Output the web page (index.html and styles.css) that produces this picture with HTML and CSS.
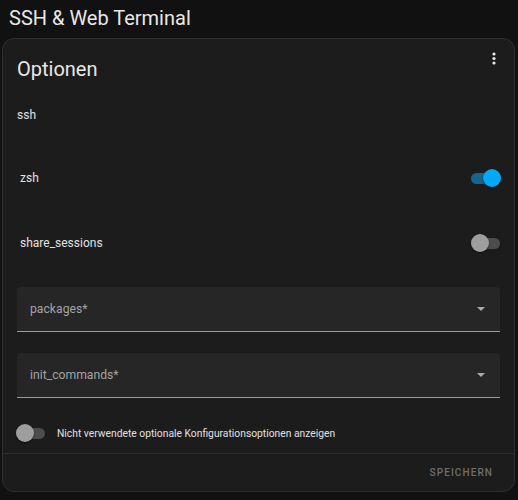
FILE: index.html
```html
<!DOCTYPE html>
<html lang="de">
<head>
<meta charset="utf-8">
<title>SSH & Web Terminal</title>
<link rel="stylesheet" href="styles.css">
</head>
<body>
<header class="page-title">SSH &amp; Web Terminal</header>
<section class="card">
  <div class="card-header">
    <h1 class="card-title">Optionen</h1>
    <button class="menu-btn" aria-label="Menü">
      <svg width="4" height="14" viewBox="0 0 4 14"><circle cx="2" cy="2" r="1.6"/><circle cx="2" cy="6.5" r="1.6"/><circle cx="2" cy="11" r="1.6"/></svg>
    </button>
  </div>
  <div class="label-row">ssh</div>
  <div class="toggle-row row-zsh">
    <span>zsh</span>
    <span class="switch on"><span class="track"></span><span class="thumb"></span></span>
  </div>
  <div class="toggle-row row-share">
    <span>share_sessions</span>
    <span class="switch"><span class="track"></span><span class="thumb"></span></span>
  </div>
  <div class="field field-first">
    <span class="field-label">packages*</span>
    <svg class="arrow" width="8" height="4" viewBox="0 0 8 4"><path d="M0 0h8L4 4z"/></svg>
  </div>
  <div class="field field-second">
    <span class="field-label">init_commands*</span>
    <svg class="arrow" width="8" height="4" viewBox="0 0 8 4"><path d="M0 0h8L4 4z"/></svg>
  </div>
  <div class="optional-row">
    <span class="switch small"><span class="track"></span><span class="thumb"></span></span>
    <span class="optional-text">Nicht verwendete optionale Konfigurationsoptionen anzeigen</span>
  </div>
  <div class="card-actions">
    <button class="save-btn">Speichern</button>
  </div>
</section>
</body>
</html>
```
FILE: styles.css
```css
html, body {
  margin: 0;
  padding: 0;
  background: #111111;
  color: #e1e1e1;
  font-family: Roboto, "Noto Sans", sans-serif;
}

.page-title {
  height: 38px;
  display: flex;
  align-items: center;
  padding-left: 9px;
  font-size: 20px;
  font-weight: 400;
  color: #e8e8e8;
  box-sizing: border-box;
  padding-bottom: 2px;
}

.card {
  margin: 0 3px 0 2px;
  height: 454px;
  box-sizing: border-box;
  background: #1c1c1c;
  border: 1px solid #2f2f2f;
  border-radius: 12px;
  padding: 0 14px;
  display: flex;
  flex-direction: column;
}

.card-header {
  height: 59px;
  display: flex;
  align-items: center;
  justify-content: space-between;
}

.card-title {
  margin: 0;
  font-size: 20px;
  font-weight: 400;
  color: #e8e8e8;
}

.menu-btn {
  background: none;
  border: 0;
  padding: 0;
  margin-right: 4px;
  margin-top: -20px;
  fill: #e8e8e8;
  display: flex;
}

.label-row {
  height: 34px;
  display: flex;
  align-items: center;
  font-size: 12px;
}

.toggle-row {
  height: 40px;
  display: flex;
  align-items: center;
  justify-content: space-between;
  padding-left: 3px;
  font-size: 12px;
}

.row-zsh { margin-top: 26px; }
.row-share { margin-top: 25px; }

.switch {
  position: relative;
  width: 29px;
  height: 18px;
  display: inline-flex;
  align-items: center;
  flex-shrink: 0;
}

.switch .track {
  width: 29px;
  height: 11px;
  border-radius: 6px;
  background: #4d4d4d;
}

.switch .thumb {
  position: absolute;
  left: 0;
  top: 0;
  width: 18px;
  height: 18px;
  border-radius: 50%;
  background: #9e9e9e;
  box-shadow: 0 1px 2px rgba(0,0,0,0.5);
}

.switch.on .track { background: #14668e; }
.switch.on .thumb { left: 12px; background: #03a9f4; }

.field {
  height: 45px;
  box-sizing: border-box;
  background: #262626;
  border-radius: 4px 4px 0 0;
  border-bottom: 1px solid #9a9a9a;
  display: flex;
  align-items: center;
  justify-content: space-between;
  padding: 0 15px 0 13px;
}

.field-first { margin-top: 24px; }
.field-second { margin-top: 21px; }

.field-label {
  font-size: 12.2px;
  color: #a3a3a3;
}

.arrow { fill: #aaaaaa; }

.optional-row {
  margin-top: 25px;
  height: 20px;
  display: flex;
  align-items: center;
  gap: 12px;
  margin-left: -1px;
}

.optional-text {
  font-size: 10.3px;
  color: #e1e1e1;
}

.card-actions {
  margin: 10px -14px 0;
  border-top: 1px solid #2f2f2f;
  flex: 1;
  display: flex;
  align-items: center;
  justify-content: flex-end;
  padding-right: 21px;
}

.save-btn {
  background: none;
  border: 0;
  padding: 0;
  font-family: Roboto, "Noto Sans", sans-serif;
  font-size: 10px;
  font-weight: 500;
  letter-spacing: 1.1px;
  text-transform: uppercase;
  color: #6e6e6e;
}
```
